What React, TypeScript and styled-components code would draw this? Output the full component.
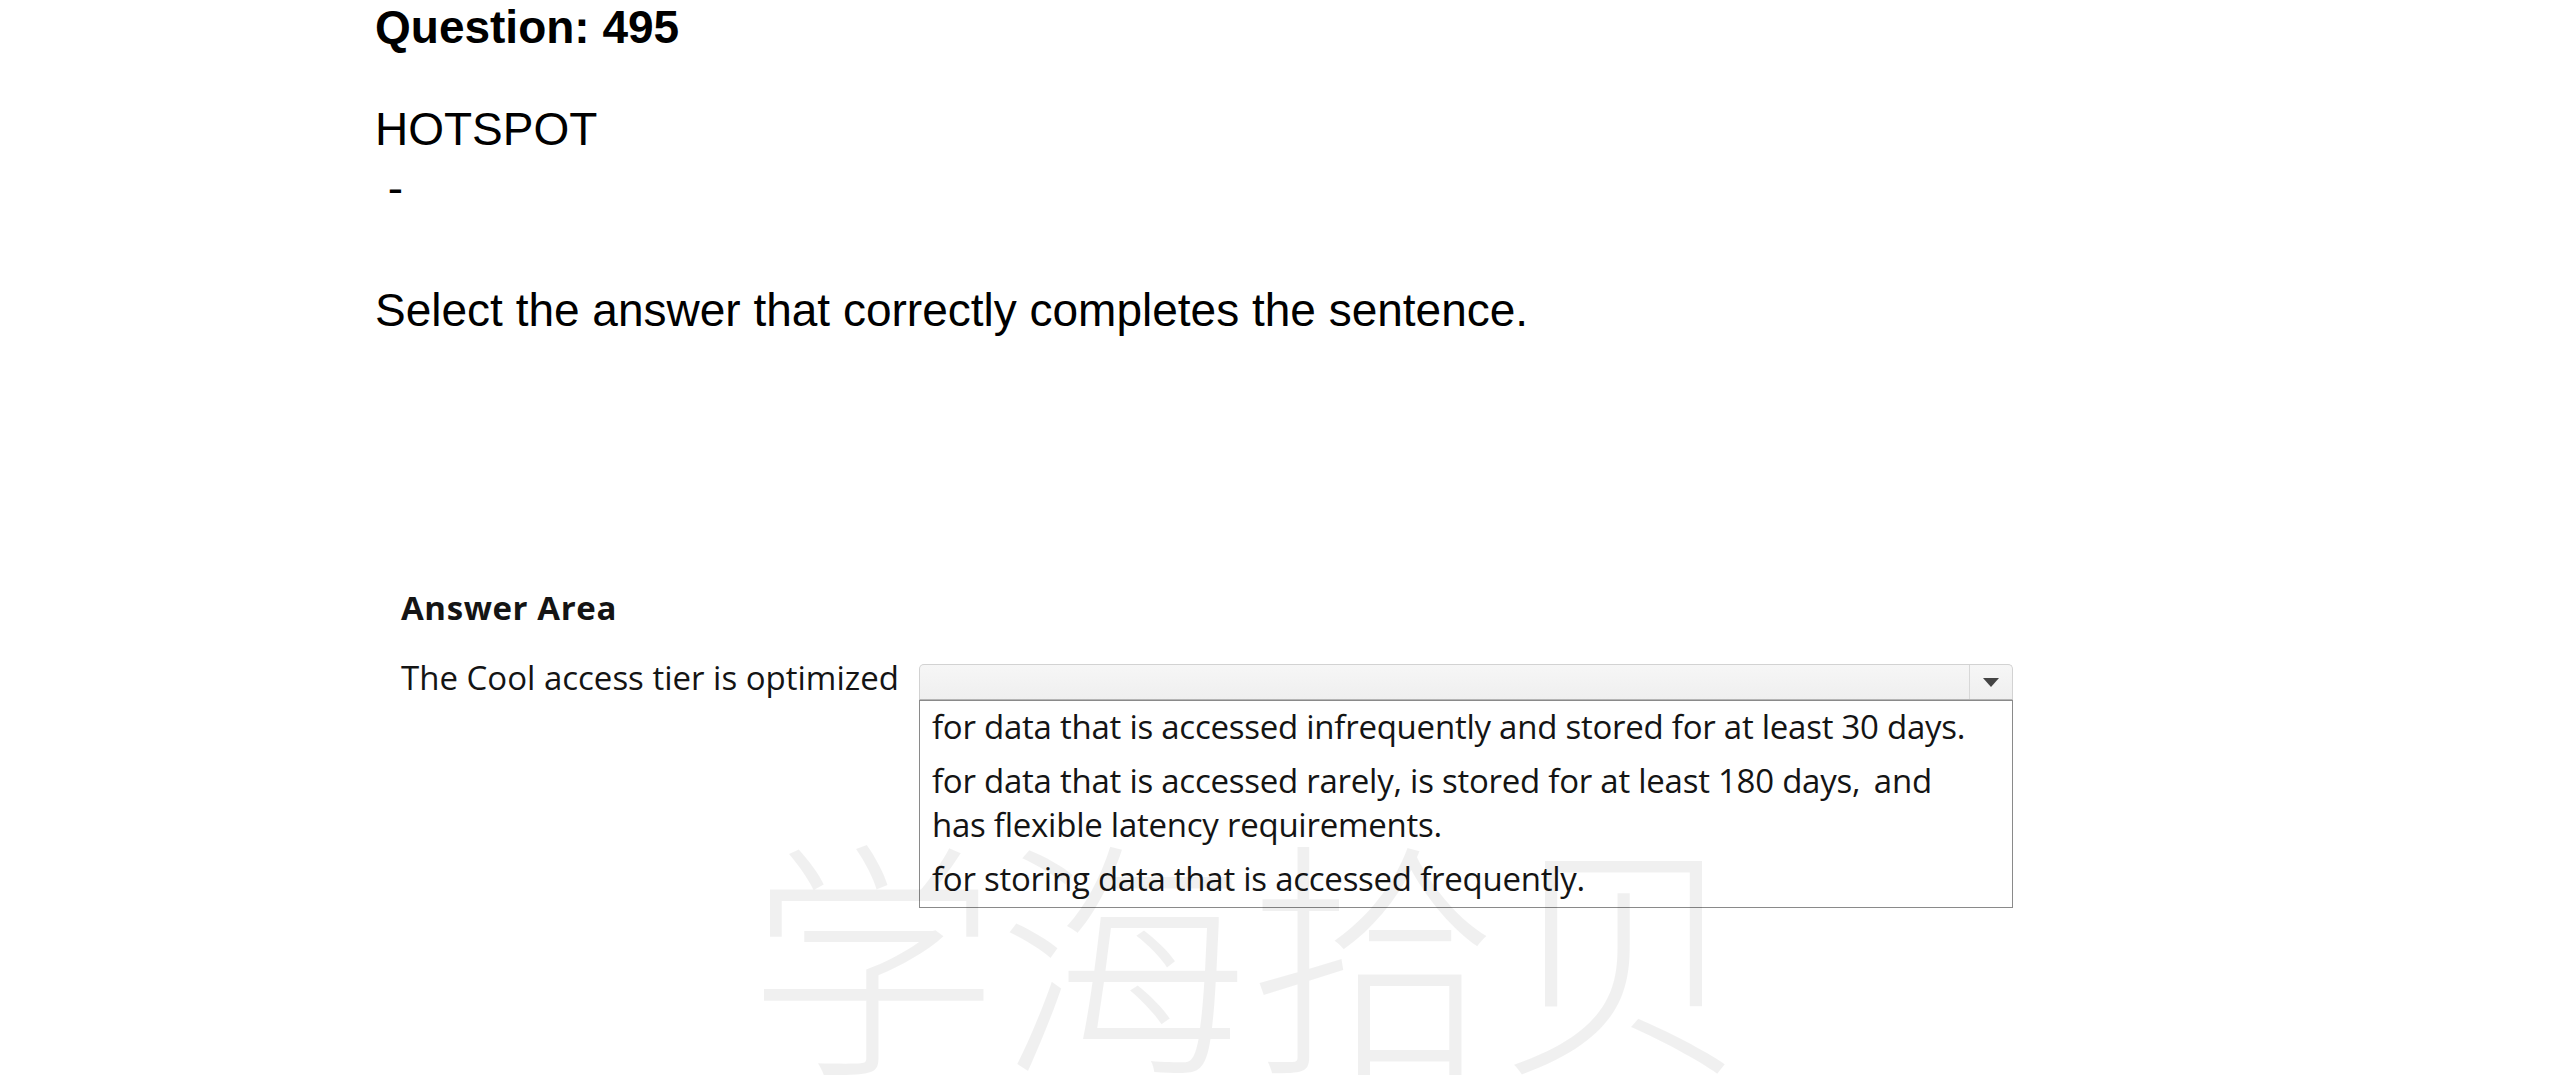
import React from "react";
import styled, { createGlobalStyle } from "styled-components";

const GlobalStyle = createGlobalStyle`
  html, body {
    margin: 0;
    padding: 0;
    background: #ffffff;
    overflow: hidden;
  }
`;

const Page = styled.div`
  position: relative;
  width: 2550px;
  height: 1075px;
  overflow: hidden;
  box-sizing: border-box;
  padding-left: 375px;
  background: #ffffff;
`;

const QuestionLine = styled.div<{ $top: number; $bold?: boolean }>`
  margin-top: ${(p) => p.$top}px;
  font-family: "Liberation Sans", Arial, sans-serif;
  font-size: 46px;
  line-height: 52px;
  font-weight: ${(p) => (p.$bold ? 700 : 400)};
  color: #000000;
  white-space: pre;
`;

const AnswerArea = styled.section`
  margin-top: 249px;
  padding-left: 26px;
  font-family: "Open Sans", "Noto Sans", sans-serif;
  font-size: 33px;
  line-height: 45px;
  color: #141414;
`;

const AreaHeading = styled.div`
  font-weight: 700;
  letter-spacing: 0.6px;
`;

const Row = styled.div`
  display: flex;
  align-items: flex-start;
  margin-top: 25px;
`;

const Label = styled.div`
  flex: 0 0 518px;
  white-space: nowrap;
`;

const Dropdown = styled.div`
  display: flex;
  flex-direction: column;
  width: 1094px;
  margin-top: 9px;
`;

const Combo = styled.div`
  display: flex;
  height: 36px;
  box-sizing: border-box;
  border: 1px solid #d2d2d2;
  border-bottom-color: #b5b5b5;
  border-radius: 5px 5px 0 0;
  background: linear-gradient(#f6f6f6, #efefef);
`;

const ComboField = styled.div`
  flex: 1;
`;

const ComboButton = styled.div`
  flex: 0 0 42px;
  display: flex;
  align-items: center;
  justify-content: center;
  border-left: 1px solid #d8d8d8;
`;

const Options = styled.ul`
  list-style: none;
  margin: 0;
  box-sizing: border-box;
  height: 208px;
  padding: 4px 0 6px 12px;
  border: 1px solid #8a8a8a;
  background: #ffffff;
  display: flex;
  flex-direction: column;
  gap: 10px;
  line-height: 44px;
  letter-spacing: -0.25px;
`;

const Option = styled.li`
  margin: 0;
  padding: 0;
  white-space: nowrap;
`;

const Watermark = styled.div`
  position: absolute;
  left: 748px;
  top: 822px;
  font-family: "Noto Sans CJK SC", sans-serif;
  font-weight: 200;
  font-size: 250px;
  line-height: 1;
  color: rgba(0, 0, 0, 0.06);
  white-space: nowrap;
  pointer-events: none;
  user-select: none;
`;

export default function App() {
  return (
    <>
      <GlobalStyle />
      <Page>
        <QuestionLine $top={1} $bold>
          Question: 495
        </QuestionLine>
        <QuestionLine $top={50}>HOTSPOT</QuestionLine>
        <QuestionLine $top={7}>{"\u00a0-"}</QuestionLine>
        <QuestionLine $top={70}>
          Select the answer that correctly completes the sentence.
        </QuestionLine>
        <AnswerArea>
          <AreaHeading>Answer Area</AreaHeading>
          <Row>
            <Label>The Cool access tier is optimized</Label>
            <Dropdown>
              <Combo>
                <ComboField />
                <ComboButton>
                  <svg width="16" height="9" viewBox="0 0 16 9">
                    <path d="M0 0 H16 L8 9 Z" fill="#444444" />
                  </svg>
                </ComboButton>
              </Combo>
              <Options>
                <Option>
                  for data that is accessed infrequently and stored for at least 30 days.
                </Option>
                <Option>
                  {"for data that is accessed rarely, is stored for at least 180 days,\u2009 and"}
                  <br />
                  has flexible latency requirements.
                </Option>
                <Option>for storing data that is accessed frequently.</Option>
              </Options>
            </Dropdown>
          </Row>
        </AnswerArea>
        <Watermark>学海拾贝</Watermark>
      </Page>
    </>
  );
}
